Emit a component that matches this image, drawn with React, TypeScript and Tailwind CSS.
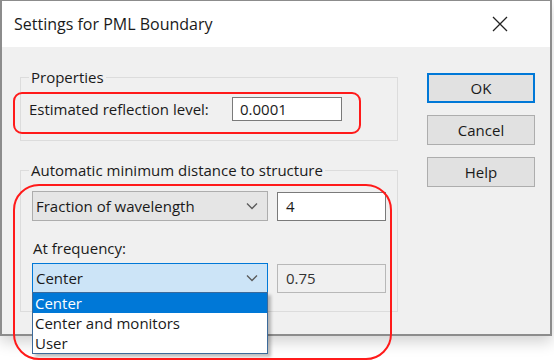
import React from "react";

const font = { fontFamily: '"Open Sans", "Noto Sans", sans-serif' };

function Chevron() {
  return (
    <svg width="12" height="8" viewBox="0 0 12 8" className="shrink-0">
      <path d="M1 1.5 L6 6.5 L11 1.5" fill="none" stroke="#5a5a5a" strokeWidth="1.3" />
    </svg>
  );
}

export default function App() {
  return (
    <div className="relative w-[554px] h-[362px] bg-white overflow-hidden text-[#1a1a1a]" style={font}>
      {/* window */}
      <div className="relative w-[552px] h-[336px] flex flex-col border border-[#8c8c8c] border-l-2 border-r-2 border-b-2 shadow-[0_6px_14px_rgba(0,0,0,0.18)]">
        {/* title bar */}
        <div className="h-[46px] bg-white flex items-center justify-between pl-[12px] pr-[42px] shrink-0">
          <span className="text-[16px]">Settings for PML Boundary</span>
          <svg width="16" height="16" viewBox="0 0 16 16">
            <path d="M1 1 L15 15 M15 1 L1 15" stroke="#222" strokeWidth="1.3" />
          </svg>
        </div>
        {/* content */}
        <div className="flex-1 bg-[#f0f0f0] flex text-[15px]">
          <div className="flex flex-col w-[378px] ml-[18px] mt-[20px]">
            <fieldset className="border border-[#dcdcdc] h-[74px] px-[7px]">
              <legend className="ml-[1px] px-[2px] leading-[20px]">Properties</legend>
              <div className="flex items-center mt-[10px]">
                <span className="ml-[1px] w-[203px]">Estimated reflection level:</span>
                <div className="w-[110px] h-[24px] bg-white border border-[#7a7a7a] flex items-center pl-[7px]">0.0001</div>
              </div>
            </fieldset>
            <fieldset className="border border-[#dcdcdc] h-[152px] mt-[19px] px-[11px]">
              <legend className="ml-[-3px] px-[2px] leading-[20px]">Automatic minimum distance to structure</legend>
              <div className="flex items-center mt-[11px]">
                <div className="w-[236px] h-[30px] bg-[#e5e5e5] border border-[#adadad] flex items-center justify-between pl-[3px] pr-[9px]">
                  <span>Fraction of wavelength</span>
                  <Chevron />
                </div>
                <div className="ml-[9px] w-[109px] h-[29px] bg-white border border-[#7a7a7a] flex items-center pl-[8px]">4</div>
              </div>
              <div className="mt-[17px] leading-[20px] pl-[1px]">At frequency:</div>
              <div className="flex items-center mt-[5px]">
                <div className="relative w-[236px] h-[30px] bg-[#cce4f7] border border-[#0078d7] flex items-center justify-between pl-[3px] pr-[9px]">
                  <span>Center</span>
                  <Chevron />
                  {/* dropdown list */}
                  <div className="absolute left-[-1px] top-[28px] w-[236px] bg-white border border-[#3c6a9a] shadow-[3px_3px_3px_rgba(0,0,0,0.25)] flex flex-col leading-[20px] z-10">
                    <div className="bg-[#0078d7] text-white pl-[2px] h-[20px]">Center</div>
                    <div className="pl-[2px] h-[20px]">Center and monitors</div>
                    <div className="pl-[2px] h-[20px]">User</div>
                  </div>
                </div>
                <div className="ml-[9px] w-[109px] h-[29px] bg-[#f0f0f0] border border-[#b8b8b8] flex items-center pl-[8px] text-[#333]">0.75</div>
              </div>
            </fieldset>
          </div>
          <div className="flex flex-col ml-[29px] mt-[26px] gap-[12px]">
            <button className="w-[108px] h-[30px] bg-[#e1e1e1] border-2 border-[#0078d7] flex items-center justify-center">OK</button>
            <button className="w-[108px] h-[30px] bg-[#e1e1e1] border border-[#adadad] flex items-center justify-center">Cancel</button>
            <button className="w-[108px] h-[30px] bg-[#e1e1e1] border border-[#adadad] flex items-center justify-center">Help</button>
          </div>
        </div>
      </div>
      {/* red annotation outlines */}
      <div className="absolute left-[13px] top-[92px] w-[348px] h-[42px] border-2 border-[#ff1a1a] rounded-[9px] pointer-events-none" />
      <div className="absolute left-[13px] top-[184px] w-[379px] h-[176px] border-2 border-[#ff1a1a] rounded-[26px] pointer-events-none z-20" />
    </div>
  );
}
